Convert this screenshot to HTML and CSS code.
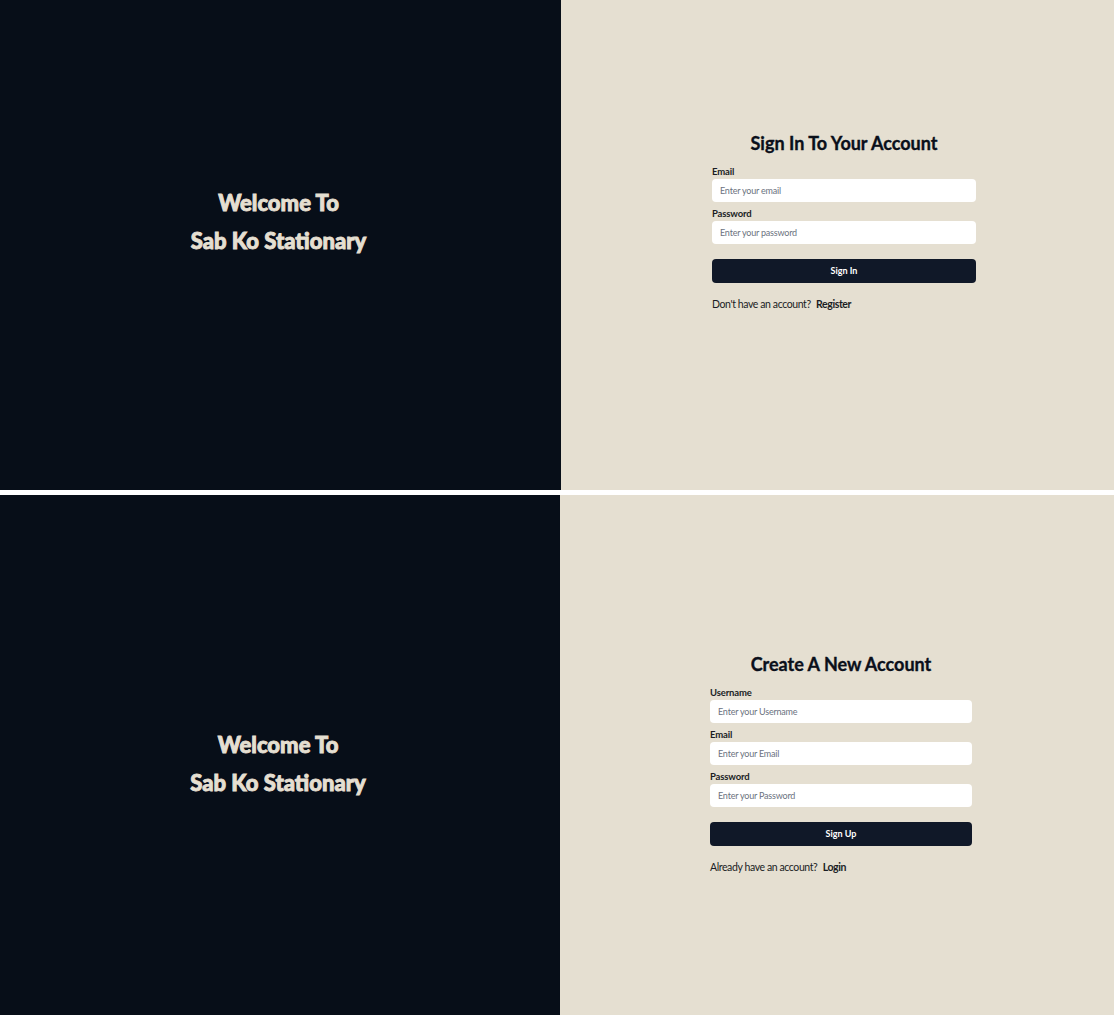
FILE: index.html
```html
<!DOCTYPE html>
<html lang="en">
<head>
<meta charset="utf-8">
<title>Sab Ko Stationary</title>
<link rel="stylesheet" href="styles.css">
</head>
<body>
  <section class="screen screen-login">
    <div class="brand brand-login">
      <h1 class="welcome">Welcome To</h1>
      <h1 class="welcome">Sab Ko Stationary</h1>
    </div>
    <div class="auth auth-login">
      <form class="form">
        <h2 class="title">Sign In To Your Account</h2>
        <div class="field">
          <label class="label">Email</label>
          <input class="input" type="text" placeholder="Enter your email">
        </div>
        <div class="field">
          <label class="label">Password</label>
          <input class="input" type="password" placeholder="Enter your password">
        </div>
        <button class="btn" type="button">Sign In</button>
        <p class="alt">Don't have an account? <a class="link">Register</a></p>
      </form>
    </div>
  </section>
  <section class="screen screen-register">
    <div class="brand brand-register">
      <h1 class="welcome">Welcome To</h1>
      <h1 class="welcome">Sab Ko Stationary</h1>
    </div>
    <div class="auth auth-register">
      <form class="form form-register">
        <h2 class="title">Create A New Account</h2>
        <div class="field">
          <label class="label">Username</label>
          <input class="input" type="text" placeholder="Enter your Username">
        </div>
        <div class="field">
          <label class="label">Email</label>
          <input class="input" type="text" placeholder="Enter your Email">
        </div>
        <div class="field">
          <label class="label">Password</label>
          <input class="input" type="password" placeholder="Enter your Password">
        </div>
        <button class="btn" type="button">Sign Up</button>
        <p class="alt">Already have an account? <a class="link">Login</a></p>
      </form>
    </div>
  </section>
</body>
</html>
```

FILE: styles.css
```css
* { box-sizing: border-box; }
html, body { margin: 0; padding: 0; }
body {
  background: #ffffff;
  font-family: "Lato", "Open Sans", sans-serif;
  display: flex;
  flex-direction: column;
  gap: 5px;
}
.screen {
  display: flex;
}
.screen-login { height: 490px; }
.screen-register { height: 520px; }

.brand {
  background: #070e18;
  display: flex;
  flex-direction: column;
  align-items: center;
  justify-content: center;
  padding-right: 4px;
}
.brand-login { width: 561px; padding-bottom: 46px; }
.brand-register { width: 560px; padding-top: 18px; }

.welcome {
  margin: 0;
  color: #e5dfd1;
  font-family: "Lato", sans-serif;
  font-weight: 900;
  font-size: 22px;
  line-height: 38px;
  -webkit-text-stroke: 0.9px #e5dfd1;
}

.auth {
  flex: 1;
  background: #e5dfd1;
  display: flex;
  align-items: center;
  justify-content: center;
}
.auth-login { padding-left: 13px; padding-bottom: 49px; }
.auth-register { padding-left: 8px; padding-top: 15px; }

.form {
  width: 264px;
  display: flex;
  flex-direction: column;
  gap: 3px;
}
.form-register { width: 262px; }

.title {
  margin: 0 0 5px;
  text-align: center;
  font-size: 18px;
  line-height: 24px;
  font-weight: 700;
  color: #0a0f1a;
  -webkit-text-stroke: 0.35px #0a0f1a;
}
.field {
  display: flex;
  flex-direction: column;
}
.label {
  font-size: 9.5px;
  line-height: 16px;
  letter-spacing: -0.15px;
  font-weight: 700;
  color: #1a1d24;
  transform: translateY(1px);
}
.input {
  height: 23px;
  border: none;
  border-radius: 4px;
  background: #ffffff;
  padding: 0 8px;
  font-family: inherit;
  font-size: 9px;
  letter-spacing: -0.2px;
  color: #111827;
  outline: none;
}
.input::placeholder { color: #6b7280; }
.btn {
  margin-top: 12px;
  height: 24px;
  border: none;
  border-radius: 4px;
  background: #101828;
  color: #ffffff;
  font-family: inherit;
  font-size: 9px;
  font-weight: 700;
}
.alt {
  margin: 11px 0 0;
  font-size: 10.5px;
  line-height: 14px;
  letter-spacing: -0.4px;
  color: #1a1d24;
}
.link {
  margin-left: 3px;
  font-weight: 700;
  color: #1a1d24;
}
```
